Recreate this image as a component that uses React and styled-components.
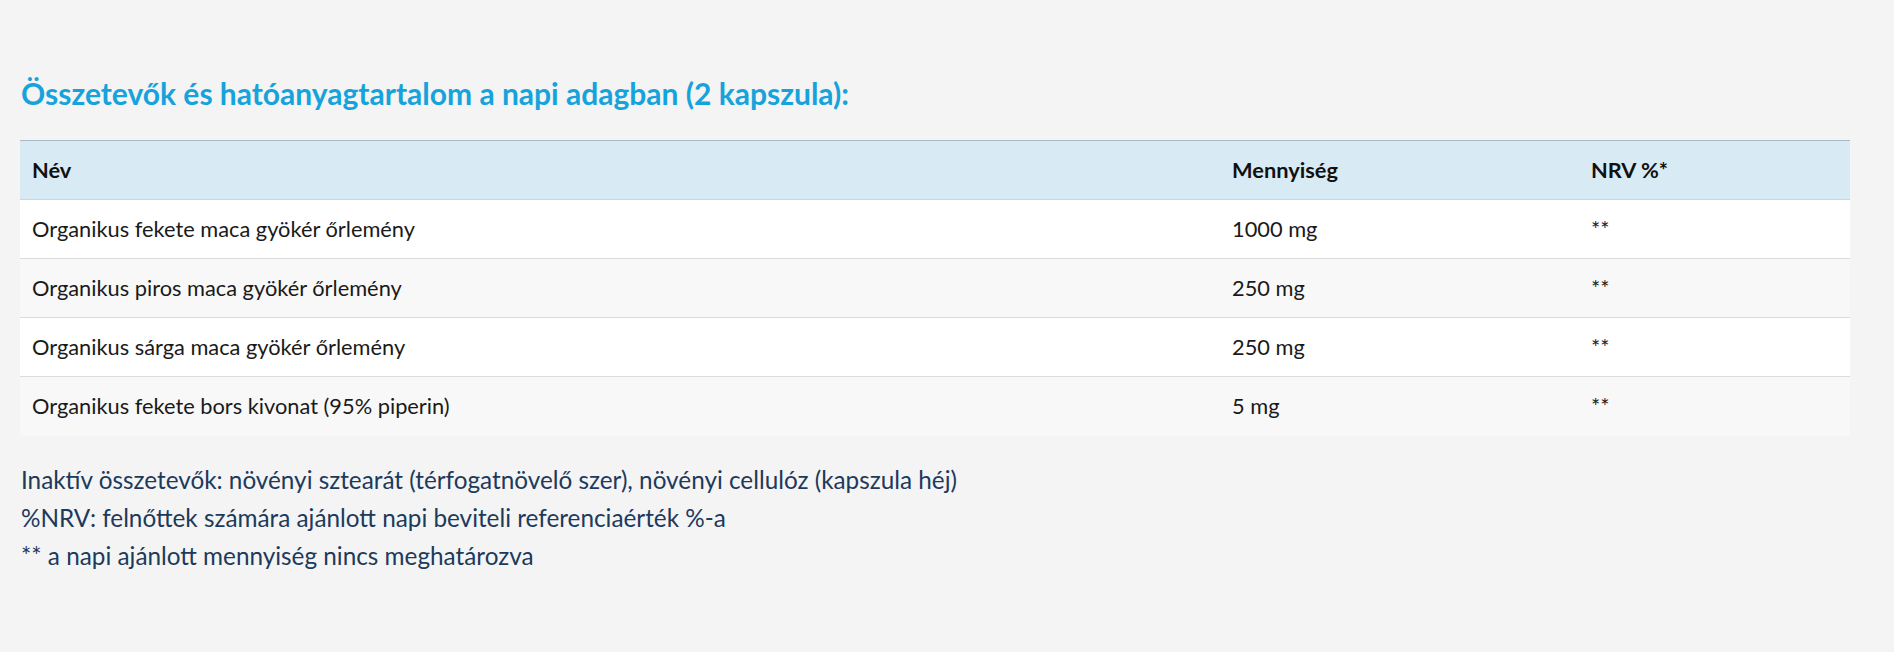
import React from "react";
import styled, { createGlobalStyle } from "styled-components";

const Global = createGlobalStyle`
  html, body { margin: 0; padding: 0; background: #f4f4f4; }
  body { font-family: Lato, "Noto Sans", sans-serif; }
`;

const Page = styled.main`
  padding: 75px 44px 60px 20px;
  min-height: 652px;
  box-sizing: border-box;
`;

const Title = styled.h2`
  margin: 0 0 29px;
  padding-left: 1px;
  font-family: Lato, sans-serif;
  font-weight: 700;
  font-size: 30px;
  line-height: 36px;
  color: #16a3db;
`;

const Table = styled.table`
  width: 100%;
  border-collapse: collapse;
  table-layout: fixed;
  font-family: Lato, sans-serif;
  font-size: 21.8px;
  line-height: 1.2;
`;

const HeadRow = styled.tr`
  background: #d8ebf5;
  border-top: 1px solid #a9b8c2;
  border-bottom: 1px solid #c9d6de;
`;

const Th = styled.th`
  height: 59px;
  padding: 0 12px;
  text-align: left;
  vertical-align: middle;
  font-weight: 700;
  color: #111;
  box-sizing: border-box;
`;

const Row = styled.tr`
  background: ${(p) => (p.$alt ? "#f8f8f8" : "#ffffff")};
  border-bottom: ${(p) => (p.$last ? "none" : "1px solid #dcdcdc")};
`;

const Td = styled.td`
  height: 59px;
  padding: 0 12px;
  vertical-align: middle;
  color: #1a1a1a;
  box-sizing: border-box;
`;

const Notes = styled.div`
  margin-top: 25px;
  padding-left: 1px;
  font-family: Lato, sans-serif;
  font-size: 24.3px;
  line-height: 38px;
  color: #1d3a5c;
`;

const rows = [
  ["Organikus fekete maca gyökér őrlemény", "1000 mg", "**"],
  ["Organikus piros maca gyökér őrlemény", "250 mg", "**"],
  ["Organikus sárga maca gyökér őrlemény", "250 mg", "**"],
  ["Organikus fekete bors kivonat (95% piperin)", "5 mg", "**"],
];

export default function App() {
  return (
    <>
      <Global />
      <Page>
        <Title>Összetevők és hatóanyagtartalom a napi adagban (2 kapszula):</Title>
        <Table>
          <colgroup>
            <col style={{ width: 1200 }} />
            <col style={{ width: 359 }} />
            <col style={{ width: 271 }} />
          </colgroup>
          <thead>
            <HeadRow>
              <Th>Név</Th>
              <Th>Mennyiség</Th>
              <Th>NRV %*</Th>
            </HeadRow>
          </thead>
          <tbody>
            {rows.map((r, i) => (
              <Row key={i} $alt={i % 2 === 1} $last={i === rows.length - 1}>
                <Td>{r[0]}</Td>
                <Td>{r[1]}</Td>
                <Td>{r[2]}</Td>
              </Row>
            ))}
          </tbody>
        </Table>
        <Notes>
          <div>Inaktív összetevők: növényi sztearát (térfogatnövelő szer), növényi cellulóz (kapszula héj)</div>
          <div>%NRV: felnőttek számára ajánlott napi beviteli referenciaérték %-a</div>
          <div>** a napi ajánlott mennyiség nincs meghatározva</div>
        </Notes>
      </Page>
    </>
  );
}
